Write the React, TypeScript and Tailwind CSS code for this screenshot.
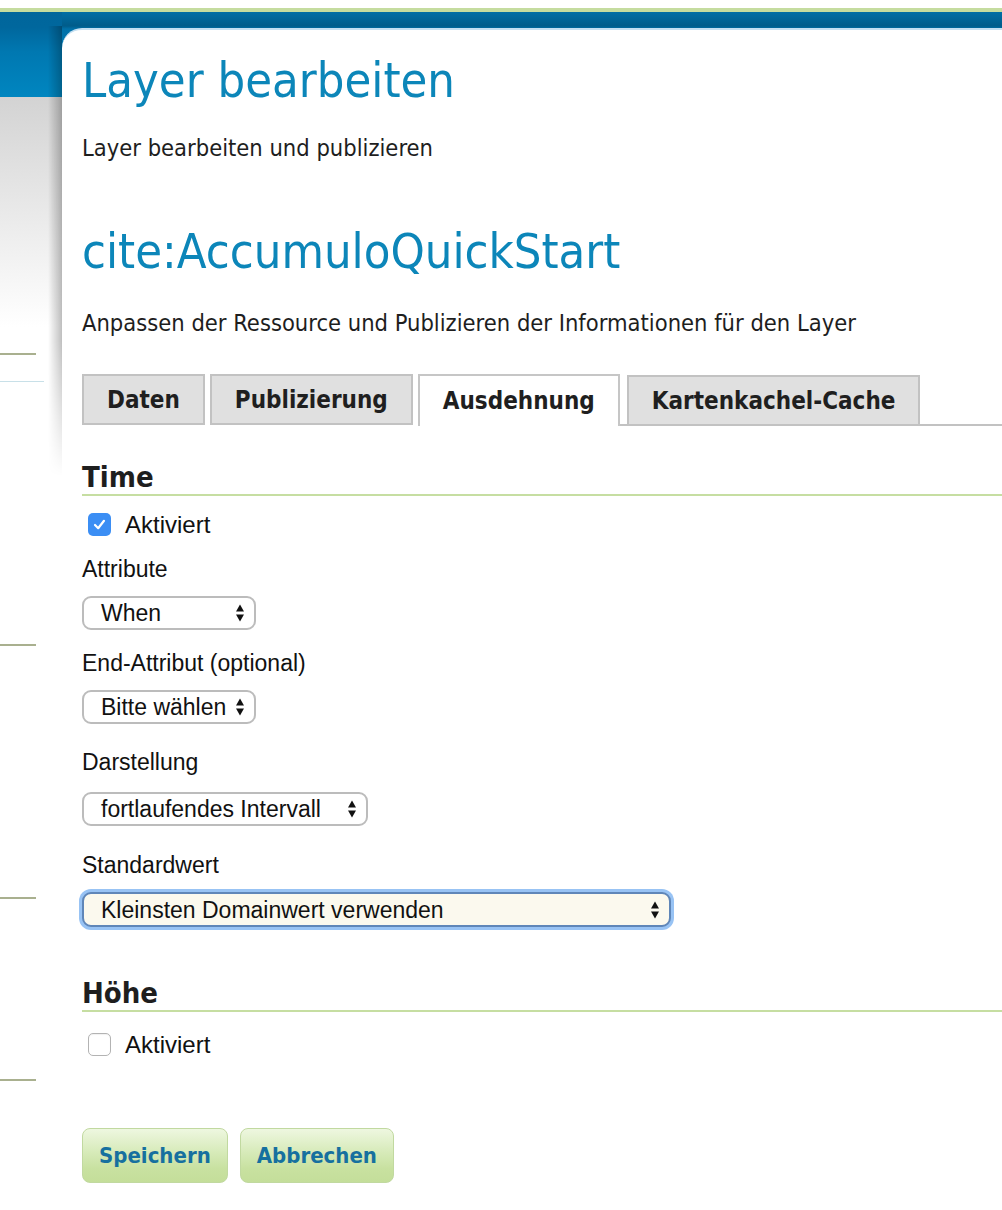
import clsx from "clsx";

const verdanaish = "font-['DejaVu_Sans_Condensed','DejaVu_Sans',sans-serif]";
const helv = "font-['Liberation_Sans',Arial,sans-serif]";

function Arrows() {
    return (
        <svg width="10" height="20" viewBox="0 0 10 20" className="shrink-0">
            <path d="M5 1.5 L9 8.5 H1 Z" fill="#111" />
            <path d="M5 18.5 L9 11.5 H1 Z" fill="#111" />
        </svg>
    );
}

function FakeSelect({ value, width, focused = false }: { value: string; width: string; focused?: boolean }) {
    return (
        <div
            className={clsx(
                "flex items-center justify-between rounded-[9px] pl-[17px] pr-[9px] text-[23px] text-[#111]",
                helv,
                width,
                focused
                    ? "h-[35px] border-2 border-[#5f86b8] bg-[#fbf9ee] shadow-[0_0_0_3px_#98c3f4]"
                    : "h-[34px] border-2 border-[#bcbcbc] bg-white"
            )}
        >
            <span className="leading-[30px]">{value}</span>
            <Arrows />
        </div>
    );
}

function Check({ checked }: { checked: boolean }) {
    return checked ? (
        <span className="flex h-[23px] w-[23px] items-center justify-center rounded-[5px] bg-[#3b8ef4]">
            <svg width="15" height="15" viewBox="0 0 15 15">
                <path d="M3 8 L6.2 11.2 L12 3.8" fill="none" stroke="white" strokeWidth="2.2" strokeLinecap="round" strokeLinejoin="round" />
            </svg>
        </span>
    ) : (
        <span className="h-[23px] w-[23px] rounded-[5px] border border-[#b3b3b3] bg-white shadow-[inset_0_1px_1px_rgba(0,0,0,0.06)]" />
    );
}

function CheckRow({ checked, className }: { checked: boolean; className: string }) {
    return (
        <div className={clsx("flex h-[23px] items-center pl-[6px]", className)}>
            <Check checked={checked} />
            <span className={clsx("ml-[14px] text-[24px] leading-[23px] text-[#111]", helv)}>Aktiviert</span>
        </div>
    );
}

function Label({ text, className }: { text: string; className: string }) {
    return <div className={clsx("text-[23px] leading-[30px] text-[#111]", helv, className)}>{text}</div>;
}

function Tab({ label, active = false, className }: { label: string; active?: boolean; className?: string }) {
    return (
        <div
            className={clsx(
                "flex h-[51px] items-center px-[23px] text-[24px] font-bold text-[#1f1f1f]",
                active
                    ? "relative z-10 border-2 border-b-0 border-[#c6c6c6] bg-white"
                    : "border-2 border-[#c2c2c2] bg-[#e0e0e0]",
                className
            )}
        >
            {label}
        </div>
    );
}

function Section({ title, className }: { title: string; className: string }) {
    return (
        <h3 className={clsx("border-b-2 border-[#c6dea2] text-[29px] font-bold leading-[33px] text-[#1e1e1e]", className)}>
            {title}
        </h3>
    );
}

export default function App() {
    return (
        <div className={clsx("h-[1210px] w-[1002px] overflow-hidden bg-white", verdanaish)}>
            <div className="h-[8px] bg-white" />
            <div className="h-[4px] bg-[#c5dc9f]" />
            <div className="flex">
                {/* left strip of the page behind the panel */}
                <aside className="relative w-[62px] shrink-0">
                    <div className="h-[85px] bg-[linear-gradient(to_bottom,#00669c,#00679d_15px,#0078b1_40px,#0086c0)]" />
                    <div className="h-[1113px] bg-[linear-gradient(to_bottom,#d3d3d3,#ececec_130px,#ffffff_230px)]">
                        <div className="h-[256px]" />
                        <div className="h-[2px] w-[36px] bg-[#a9b08f]" />
                        <div className="mt-[26px] h-[1px] w-[44px] bg-[#c8e0e8]" />
                        <div className="mt-[262px] h-[2px] w-[36px] bg-[#a9b08f]" />
                        <div className="mt-[251px] h-[2px] w-[36px] bg-[#a9b08f]" />
                        <div className="mt-[180px] h-[2px] w-[36px] bg-[#a9b08f]" />
                    </div>
                    <div className="absolute right-0 top-[14px] h-[450px] w-[14px] bg-[linear-gradient(to_right,rgba(0,0,0,0),rgba(0,0,0,0.25))] [mask-image:linear-gradient(to_bottom,black_70%,transparent)]" />
                </aside>

                <div className="flex-1 bg-[linear-gradient(to_bottom,#006ea5,#005c8a_14px,#0071a9_17px,#0080b9_60px)]">
                    <main className="mt-[16px] h-[1182px] rounded-tl-[20px] border-t-2 border-[#c4dff1] bg-white pl-[20px] pt-[21px]">
                        <h1 className="text-[48.5px] leading-[58px] text-[#0c86b9]">Layer bearbeiten</h1>
                        <p className="mt-[24px] text-[23.5px] leading-[30px] text-[#1e1e1e]">Layer bearbeiten und publizieren</p>
                        <h2 className="mt-[59px] text-[48.5px] leading-[58px] text-[#0c86b9]">cite:AccumuloQuickStart</h2>
                        <p className="mt-[28px] text-[23.5px] leading-[30px] text-[#1e1e1e]">
                            Anpassen der Ressource und Publizieren der Informationen für den Layer
                        </p>

                        <div className="mt-[36px] flex items-start">
                            <Tab label="Daten" className="mr-[5px]" />
                            <Tab label="Publizierung" className="mr-[5px]" />
                            <Tab label="Ausdehnung" active className="h-[52px]" />
                            <div className="flex h-[52px] flex-1 items-end border-b-2 border-[#c2c2c2]">
                                <Tab label="Kartenkachel-Cache" className="ml-[7px] -mb-[2px]" />
                            </div>
                        </div>

                        <Section title="Time" className="mt-[35px]" />
                        <CheckRow checked className="mt-[17px]" />
                        <Label text="Attribute" className="mt-[18px]" />
                        <div className="mt-[12px]">
                            <FakeSelect value="When" width="w-[174px]" />
                        </div>
                        <Label text="End-Attribut (optional)" className="mt-[18px]" />
                        <div className="mt-[12px]">
                            <FakeSelect value="Bitte wählen" width="w-[174px]" />
                        </div>
                        <Label text="Darstellung" className="mt-[23px]" />
                        <div className="mt-[15px]">
                            <FakeSelect value="fortlaufendes Intervall" width="w-[286px]" />
                        </div>
                        <Label text="Standardwert" className="mt-[24px]" />
                        <div className="mt-[12px]">
                            <FakeSelect value="Kleinsten Domainwert verwenden" width="w-[589px]" focused />
                        </div>

                        <Section title="Höhe" className="mt-[50px]" />
                        <CheckRow checked={false} className="mt-[21px]" />

                        <div className="mt-[72px] flex gap-[12px]">
                            {["Speichern", "Abbrechen"].map((b) => (
                                <button
                                    key={b}
                                    className="h-[55px] rounded-[8px] border border-[#c1d9a0] bg-[linear-gradient(to_bottom,#eef7e0,#d6eab8_45%,#c8e1a0_75%,#c4de9a)] px-[16px] text-[22px] font-bold text-[#16709f]"
                                >
                                    {b}
                                </button>
                            ))}
                        </div>
                    </main>
                </div>
            </div>
        </div>
    );
}
